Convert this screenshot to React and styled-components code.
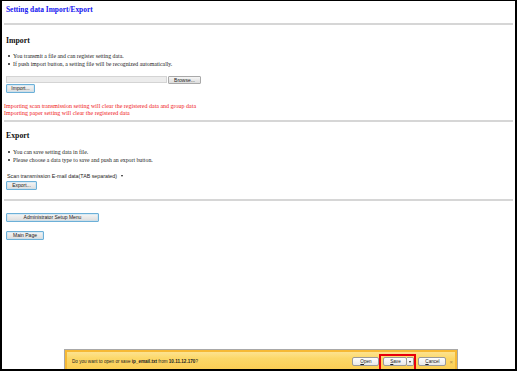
import styled, { createGlobalStyle } from "styled-components";

const Global = createGlobalStyle`
  html, body { margin: 0; padding: 0; background: #fff; }
  body { font-family: "Liberation Serif", "Times New Roman", serif; }
`;

const Frame = styled.div`
  position: relative;
  box-sizing: border-box;
  width: 517px;
  height: 371px;
  border: 2px solid #000;
  border-top-width: 1px;
  background: #fff;
  overflow: hidden;
  padding: 0 1px 0 2px;
`;

const Title = styled.h1`
  margin: 4px 0 0 2px;
  height: 9px;
  line-height: 9px;
  font-size: 7.4px;
  font-weight: bold;
  color: #1414f0;
`;

const Rule = styled.div`
  margin-top: ${(p) => p.$gap}px;
  height: 2px;
  background: #d6d6d6;
  margin-right: 1px;
`;

const Heading = styled.h2`
  margin: ${(p) => p.$gap}px 0 0 2px;
  height: 10px;
  line-height: 10px;
  font-size: 7.8px;
  font-weight: bold;
  color: #111;
`;

const List = styled.ul`
  margin: ${(p) => p.$gap}px 0 0 0;
  padding: 0 0 0 9px;
  list-style: none;
`;

const Item = styled.li`
  position: relative;
  height: 8px;
  line-height: 8px;
  font-size: 5.8px;
  color: #222;
  white-space: nowrap;
  &::before {
    content: "";
    position: absolute;
    left: -5px;
    top: 3px;
    width: 2px;
    height: 2px;
    border-radius: 50%;
    background: #222;
  }
`;

const FileRow = styled.div`
  display: flex;
  align-items: flex-start;
  gap: 1px;
  margin: 8px 0 0 2px;
  height: 8px;
`;

const FileBox = styled.div`
  box-sizing: border-box;
  width: 161px;
  height: 7px;
  background: #ececec;
  border: 1px solid #d4d4d4;
`;

const Button = styled.button`
  display: flex;
  align-items: center;
  justify-content: center;
  box-sizing: border-box;
  width: ${(p) => p.$w}px;
  height: ${(p) => p.$h || 9}px;
  margin: ${(p) => p.$gap || 0}px 0 0 ${(p) => (p.$inline ? 0 : 2)}px;
  padding: 0;
  border: 1px solid ${(p) => (p.$plain ? "#a9a9a9" : "#6cb0d8")};
  border-radius: 1px;
  background: linear-gradient(#f6f6f6, #dcdcdc);
  box-shadow: ${(p) => (p.$plain ? "none" : "inset 0 0 0 0.5px #bfe0f2")};
  font-family: "Liberation Sans", Arial, sans-serif;
  font-size: 5px;
  color: #222;
  line-height: 1;
`;

const Warning = styled.div`
  margin: 10px 0 0 0;
  color: #f01818;
  font-size: 6px;
  line-height: 7px;
  & > div { height: 7px; white-space: nowrap; }
`;

const Select = styled.div`
  display: flex;
  align-items: center;
  gap: 4px;
  box-sizing: border-box;
  width: 123px;
  height: 8px;
  margin: 8px 0 0 2px;
  padding: 0 2px 0 1px;
  font-family: "Liberation Sans", Arial, sans-serif;
  font-size: 5.3px;
  color: #222;
  white-space: nowrap;
  background: #fff;
`;

const Caret = styled.span`
  width: 0;
  height: 0;
  border-left: 1.5px solid transparent;
  border-right: 1.5px solid transparent;
  border-top: 2px solid #222;
`;

const InfoBar = styled.div`
  position: absolute;
  left: 62px;
  top: 348px;
  width: 394px;
  height: 22px;
  box-sizing: border-box;
  display: flex;
  align-items: center;
  padding: 2px 4px 0 7px;
  border-top: 1px solid #a8a8a8;
  border-left: 1px solid #a8a8a8;
  border-right: 1px solid #a8a8a8;
  box-shadow: inset 0 0 0 2px #f6b935;
  background: linear-gradient(#fde69c 0%, #fcd869 40%, #fbcd52 100%);
  font-family: "Liberation Sans", Arial, sans-serif;
  font-size: 4.6px;
  color: #222;
`;

const Message = styled.div`
  flex: 1;
  white-space: nowrap;
  b { font-weight: bold; }
`;

const BarButton = styled.div`
  display: flex;
  align-items: center;
  justify-content: center;
  box-sizing: border-box;
  width: ${(p) => p.$w}px;
  height: 9px;
  margin-right: ${(p) => p.$mr || 0}px;
  border: 1px solid #9a9a9a;
  border-radius: 2px;
  background: linear-gradient(#ffffff, #e8e8e8);
  font-size: 4.6px;
  color: #222;
  u { text-decoration: underline; }
`;

const SplitArrow = styled.div`
  display: flex;
  align-items: center;
  justify-content: center;
  box-sizing: border-box;
  width: 7px;
  height: 9px;
  margin-right: 4px;
  border: 1px solid #9a9a9a;
  border-left: none;
  border-radius: 0 2px 2px 0;
  background: linear-gradient(#ffffff, #e8e8e8);
`;

const Close = styled.span`
  margin-left: 3px;
  font-size: 6px;
  color: #b08a40;
`;

const Highlight = styled.div`
  position: absolute;
  left: 377px;
  top: 353px;
  width: 37px;
  height: 17px;
  box-sizing: border-box;
  border: 2px solid #e8000b;
`;

export default function App() {
  return (
    <>
      <Global />
      <Frame>
        <Title>Setting data Import/Export</Title>
        <Rule $gap={9} />

        <Heading $gap={11}>Import</Heading>
        <List $gap={6}>
          <Item>You transmit a file and can register setting data.</Item>
          <Item>If push import button, a setting file will be recognized automatically.</Item>
        </List>
        <FileRow>
          <FileBox />
          <Button $w={33} $h={8} $plain $inline>Browse...</Button>
        </FileRow>
        <Button $w={29}>Import...</Button>
        <Warning>
          <div>Importing scan transmission setting will clear the registered data and group data</div>
          <div>Importing paper setting will clear the registered data</div>
        </Warning>
        <Rule $gap={3} />

        <Heading $gap={9}>Export</Heading>
        <List $gap={7}>
          <Item>You can save setting data in file.</Item>
          <Item>Please choose a data type to save and push an export button.</Item>
        </List>
        <Select>
          <span>Scan transmission E-mail data(TAB separated)</span>
          <Caret />
        </Select>
        <Button $w={31} $gap={1}>Export...</Button>
        <Rule $gap={9} />

        <Button $w={93} $h={9} $gap={12}>Administrator Setup Menu</Button>
        <Button $w={38} $h={9} $gap={9}>Main Page</Button>

        <InfoBar>
          <Message>
            Do you want to open or save <b>ip_email.txt</b> from <b>10.11.12.170</b>?
          </Message>
          <BarButton $w={27} $mr={4}><span><u>O</u>pen</span></BarButton>
          <BarButton $w={24}><span><u>S</u>ave</span></BarButton>
          <SplitArrow><Caret /></SplitArrow>
          <BarButton $w={28}><span><u>C</u>ancel</span></BarButton>
          <Close>×</Close>
        </InfoBar>
        <Highlight />
      </Frame>
    </>
  );
}
